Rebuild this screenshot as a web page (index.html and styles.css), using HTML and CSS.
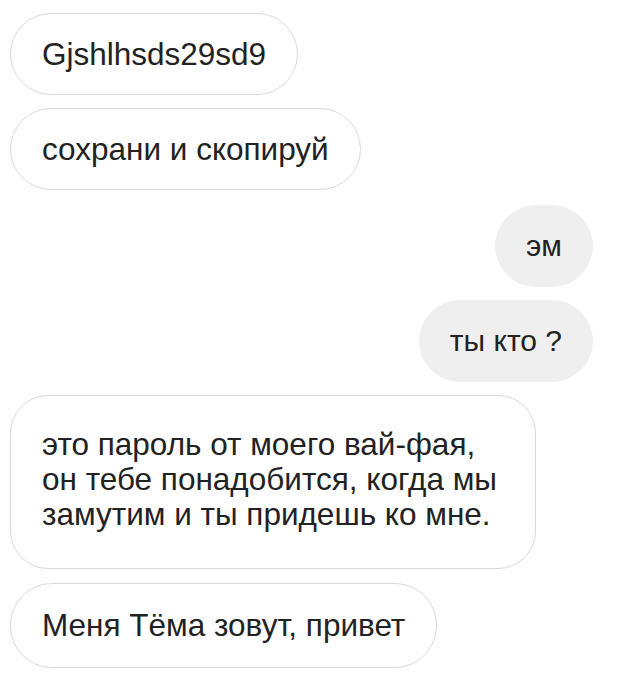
FILE: index.html
```html
<!DOCTYPE html>
<html lang="ru">
<head>
    <meta charset="UTF-8">
    <meta name="viewport" content="width=device-width, initial-scale=1.0">
    <title>Чат</title>
    <link rel="stylesheet" href="styles.css">
</head>
<body>
    <div class="chat">
        <div class="msg in">Gjshlhsds29sd9</div>
        <div class="msg in">сохрани и скопируй</div>
        <div class="msg out first-out">эм</div>
        <div class="msg out">ты кто ?</div>
        <div class="msg in long">это пароль от моего вай-фая,<br>он тебе понадобится, когда мы<br>замутим и ты придешь ко мне.</div>
        <div class="msg in last">Меня Тёма зовут, привет</div>
    </div>
</body>
</html>
```

FILE: styles.css
```css
* {
    margin: 0;
    padding: 0;
    box-sizing: border-box;
}

body {
    font-family: "Liberation Sans", Arial, sans-serif;
    background-color: #ffffff;
    color: #222222;
}

.chat {
    display: flex;
    flex-direction: column;
    gap: 13px;
    padding: 13px 27px 0 10px;
}

.msg {
    font-size: 31.5px;
    line-height: 36px;
    padding: 22px 31px;
    border-radius: 42px;
    white-space: nowrap;
}

.in {
    align-self: flex-start;
    border: 1px solid #dadada;
}

.out {
    align-self: flex-end;
    font-size: 30px;
    padding: 22px 30px;
    background-color: #efefef;
    border: 1px solid #efefef;
}

.first-out {
    margin-top: 2px;
}

.long {
    line-height: 35px;
    padding: 31px 38px 36px 31px;
    border-radius: 38px;
}

.last {
    margin-top: 1px;
    padding: 23px 31px 24px;
}
```
